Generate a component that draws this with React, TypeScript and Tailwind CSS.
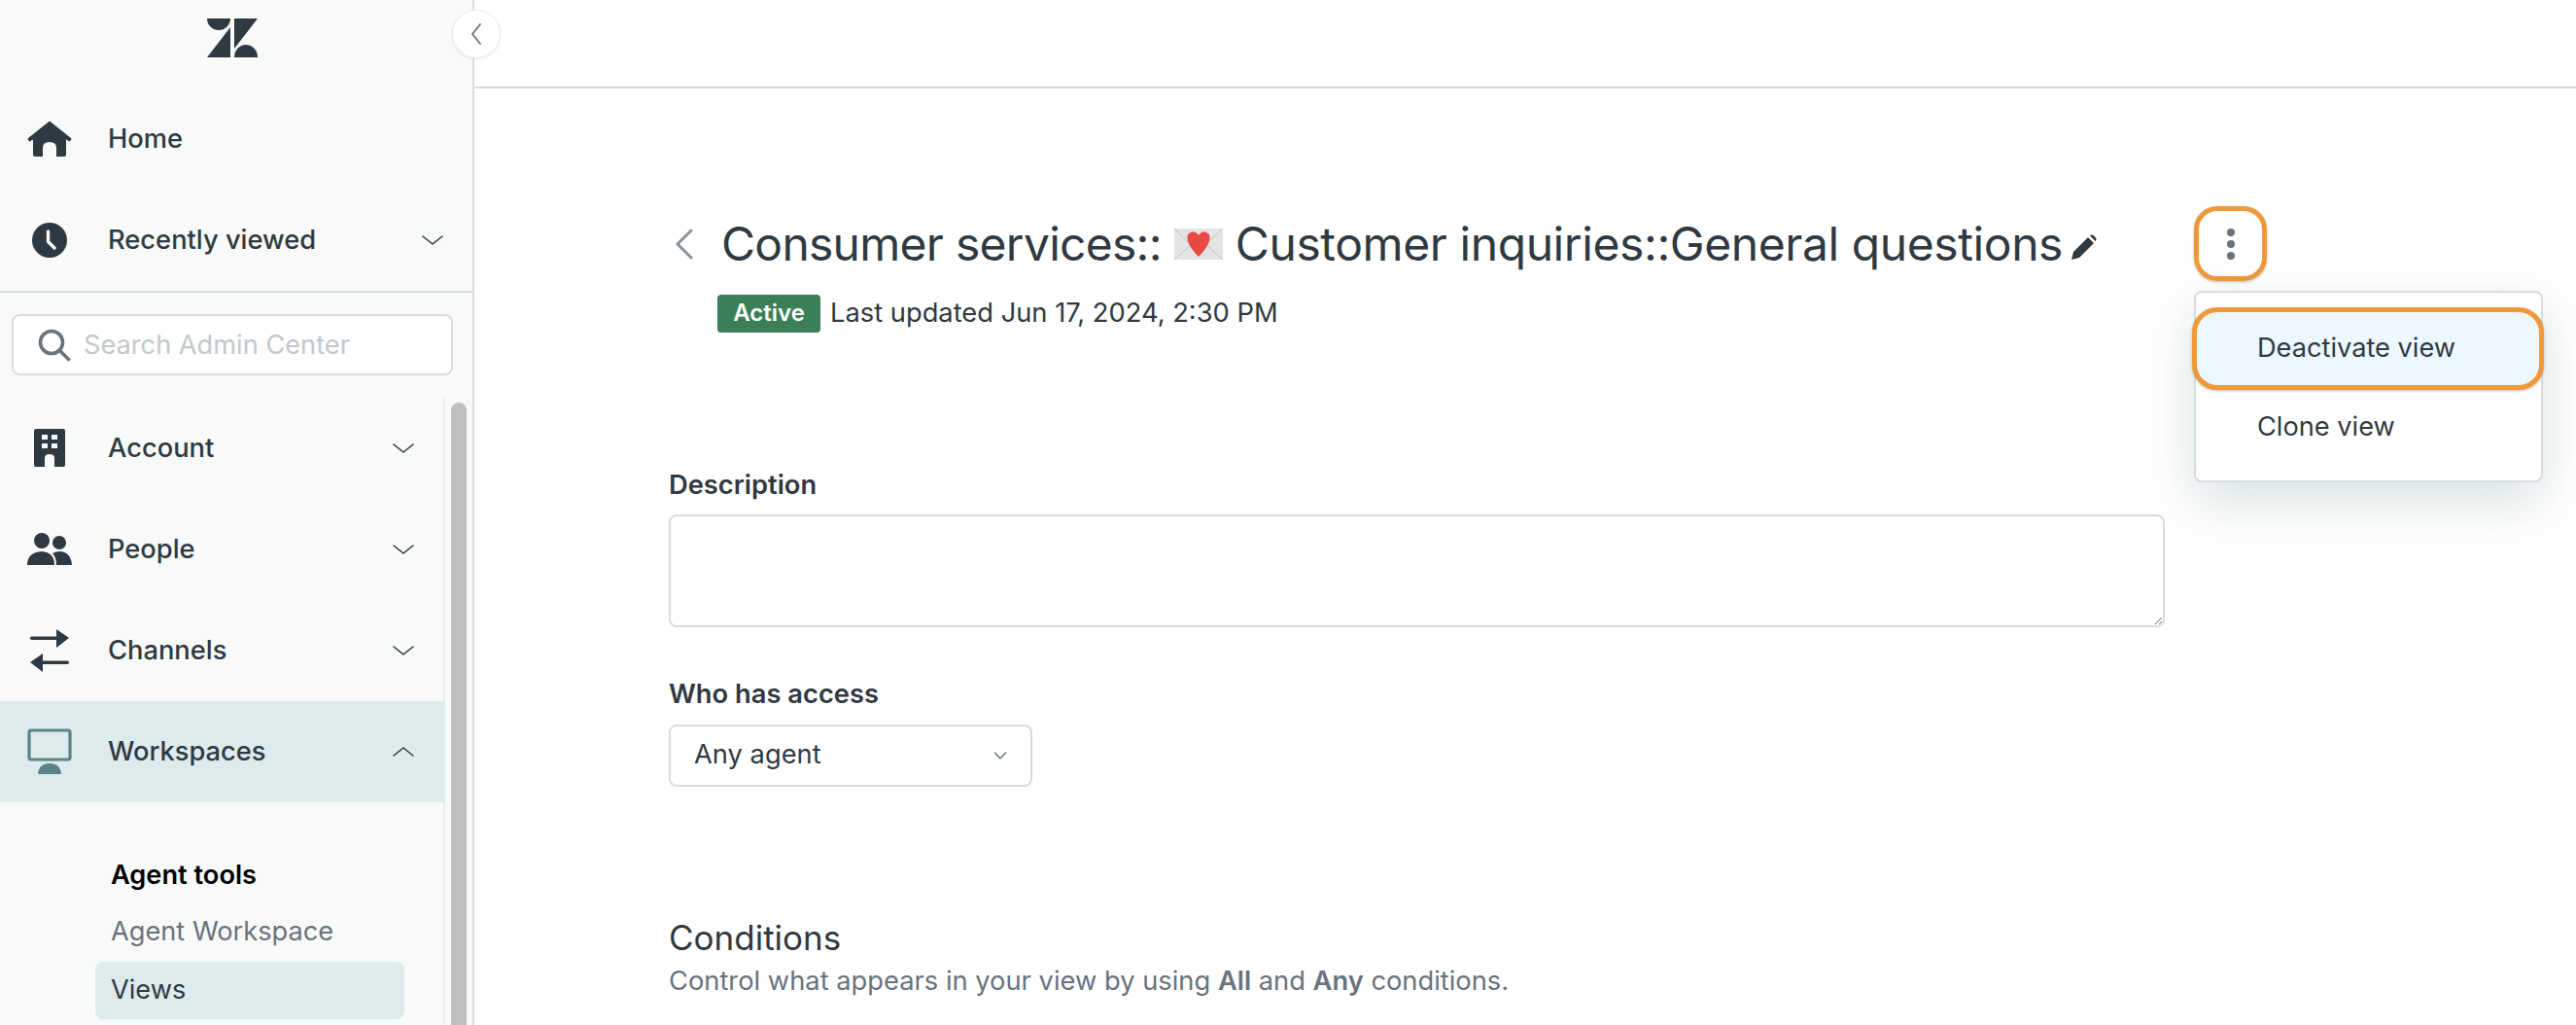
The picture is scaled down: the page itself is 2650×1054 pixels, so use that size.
import React from "react";

const Chevron = ({ up = false }: { up?: boolean }) => (
  <svg width="24" height="14" viewBox="0 0 24 14" fill="none" stroke="#2f3941" strokeWidth="1.6" strokeLinecap="round" strokeLinejoin="round">
    <path d={up ? "M2 11 L12 3 L22 11" : "M2 3 L12 11 L22 3"} />
  </svg>
);

const HomeIcon = () => (
  <svg width="46" height="38" viewBox="0 0 46 38" fill="#2f3941">
    <path d="M23 0.5 L45 18 Q46 19 45 20 L43.5 21.5 L40 19.5 L40 35 Q40 37 38 37 L30 37 L30 28 Q30 22 23 22 Q16 22 16 28 L16 37 L8 37 Q6 37 6 35 L6 19.5 L2.5 21.5 L1 20 Q0 19 1 18 Z" />
  </svg>
);

const ClockIcon = () => (
  <svg width="38" height="38" viewBox="0 0 38 38">
    <circle cx="19" cy="19" r="18" fill="#2f3941" />
    <path d="M17.5 10 L17.5 20.5 L24 27" fill="none" stroke="#f8f9f9" strokeWidth="3.4" strokeLinecap="round" strokeLinejoin="round" />
  </svg>
);

const BuildingIcon = () => (
  <svg width="32" height="40" viewBox="0 0 32 40">
    <rect x="0" y="0" width="32" height="39" rx="2" fill="#2f3941" />
    <g fill="#f8f9f9">
      <rect x="8" y="6" width="6" height="5" />
      <rect x="18" y="6" width="6" height="5" />
      <rect x="8" y="15" width="6" height="5" />
      <rect x="18" y="15" width="6" height="5" />
      <path d="M11 39 L11 30 Q11 26 16 26 Q21 26 21 30 L21 39 Z" />
    </g>
  </svg>
);

const PeopleIcon = () => (
  <svg width="46" height="34" viewBox="0 0 46 34" fill="#2f3941">
    <circle cx="15" cy="8" r="8" />
    <circle cx="33" cy="10" r="7" />
    <path d="M0 33 Q0 20 15 19 Q28 20 28 33 Z" />
    <path d="M30 33 Q30 25 26 21 Q29 19 34 19 Q45 20 46 33 Z" />
  </svg>
);

const ChannelsIcon = () => (
  <svg width="42" height="46" viewBox="0 0 42 46" fill="#2f3941">
    <rect x="1" y="8.5" width="36" height="3.4" rx="1.7" />
    <path d="M28 1 L41 10 L28 20 Z" />
    <rect x="5" y="33.5" width="36" height="3.4" rx="1.7" />
    <path d="M14 26 L1 35 L14 45 Z" />
  </svg>
);

const MonitorIcon = () => (
  <svg width="46" height="48" viewBox="0 0 46 48">
    <rect x="2" y="2" width="42" height="30" rx="2" fill="none" stroke="#5a8388" strokeWidth="3.2" />
    <path d="M11 47 Q12 36 23 36 Q34 36 35 47 Z" fill="#5a8388" />
  </svg>
);

const NavRow = ({ icon, label, open, chevron = true, active = false }: { icon: React.ReactNode; label: string; open?: boolean; chevron?: boolean; active?: boolean }) => (
  <div className={`h-[104px] flex items-center shrink-0 pr-[29px] ${active ? "bg-[#deebed]" : ""}`}>
    <div className="w-[111px] pl-[27px] pr-[36px] flex justify-center shrink-0">{icon}</div>
    <span className="flex-1 text-[27.3px] font-medium text-[#2f3941]">{label}</span>
    {chevron && <Chevron up={open} />}
  </div>
);

const Sidebar = () => (
  <aside className="w-[488px] h-full shrink-0 flex flex-col bg-[#f8f9f9] border-r-2 border-[#d8dcde]">
    <div className="h-[91px] shrink-0 flex items-center justify-center pb-[13px] pr-2">
      {/* logo */}
      <svg width="52" height="40" viewBox="0 0 52 40" fill="#2f3941">
        <path d="M24 9 L24 40 L0 40 Z" />
        <path d="M24 0 A12 12 0 0 1 0 0 Z" />
        <path d="M28 31 L28 0 L52 0 Z" />
        <path d="M28 40 A12 13 0 0 1 52 40 Z" />
      </svg>
    </div>
    <NavRow icon={<HomeIcon />} label="Home" chevron={false} />
    <div className="h-[104px] flex items-center pr-[29px] shrink-0">
      <div className="w-[111px] pl-[27px] pr-[36px] flex justify-center shrink-0"><ClockIcon /></div>
      <span className="flex-1 text-[27.3px] font-medium text-[#2f3941]">Recently viewed</span>
      <Chevron />
    </div>
    <div className="border-t-2 border-[#d8dcde] pl-3 pr-5 pt-[22px] pb-[23px] shrink-0">
      <div className="h-[63px] bg-white border-2 border-[#d8dcde] rounded-lg flex items-center pl-[25px]">
        <svg width="34" height="34" viewBox="0 0 34 34" fill="none" stroke="#68737d" strokeWidth="3.6" strokeLinecap="round">
          <circle cx="14" cy="14" r="11.5" />
          <path d="M22.5 22.5 L31.5 31.5" />
        </svg>
        <span className="ml-[13px] pt-[2px] text-[27.2px] text-[#c2c8cc]">Search Admin Center</span>
      </div>
    </div>
    <div className="flex-1 min-h-0 flex overflow-hidden">
      <nav className="w-[456px] shrink-0 flex flex-col">
        <NavRow icon={<BuildingIcon />} label="Account" />
        <NavRow icon={<PeopleIcon />} label="People" />
        <NavRow icon={<ChannelsIcon />} label="Channels" />
        <NavRow icon={<MonitorIcon />} label="Workspaces" open active />
        <div className="pl-[98px] pr-[40px] pt-[55px]">
          <div className="pl-4 h-10 flex items-center text-[27.2px] font-semibold text-black">Agent tools</div>
          <div className="pl-4 mt-[18px] h-10 flex items-center text-[27.2px] text-[#68737d]">Agent Workspace</div>
          <div className="pl-4 mt-[11px] h-[59px] flex items-center rounded-lg bg-[#deebed] text-[27.2px] text-[#2f3941]">Views</div>
        </div>
      </nav>
      <div className="flex-1 border-l-2 border-[#e9ebed] pl-[6px] pt-[5px]">
        <div className="w-4 h-full rounded-t-lg bg-[#bfbfbf]" />
      </div>
    </div>
  </aside>
);

const LoveLetter = () => (
  <svg width="50" height="32" viewBox="0 0 50 32" className="shrink-0">
    <rect width="50" height="32" fill="#e4e4e2" />
    <path d="M0 0 L25 24 L50 0 M0 32 L18 16 M50 32 L32 16" fill="none" stroke="#c4c4c2" strokeWidth="1" />
    <path d="M25 29 Q11 15 14 6 Q20 0 25 7 Q30 0 36 6 Q39 15 25 29 Z" fill="#e84a45" />
  </svg>
);

const ActionsMenu = () => (
  <div className="relative w-[75px] h-[77px] shrink-0 flex items-center justify-center rounded-[24px] border-[5px] border-[#f0993a] shadow-[0_1px_3px_rgba(0,0,0,0.25)]">
    <svg width="10" height="34" viewBox="0 0 10 34" fill="#68737d">
      <circle cx="5" cy="5" r="4" />
      <circle cx="5" cy="17" r="4" />
      <circle cx="5" cy="29" r="4" />
    </svg>
    <div className="absolute left-[-5px] top-[82px] w-[359px] h-[197px] bg-white border-2 border-[#d8dcde] rounded-lg shadow-[0_20px_56px_rgba(4,68,77,0.16)] z-10">
      <div className="absolute left-[-4px] right-[-3px] top-[15px] h-[85px] bg-[#edf7ff] border-[5px] border-[#f0993a] rounded-[26px] shadow-[0_1px_3px_rgba(0,0,0,0.25)] flex items-center pl-[62px] text-[27.2px] text-[#2f3941]">
        Deactivate view
      </div>
      <div className="absolute left-[63px] top-[118px] h-10 flex items-center text-[27.2px] text-[#2f3941]">Clone view</div>
    </div>
  </div>
);

export default function App() {
  return (
    <div className="w-[2650px] h-[1054px] flex overflow-hidden bg-white relative" style={{ fontFamily: "Inter, sans-serif" }}>
      <Sidebar />
      {/* collapse toggle sits over the sidebar edge */}
      <div className="absolute left-[465px] top-[10px] w-[50px] h-[50px] rounded-full bg-white border border-[#e9ebed] shadow-[0_1px_3px_rgba(0,0,0,0.08)] flex items-center justify-center z-10">
        <svg width="12" height="24" viewBox="0 0 12 24" fill="none" stroke="#68737d" strokeWidth="1.8" strokeLinecap="round" strokeLinejoin="round">
          <path d="M10 2 L2 12 L10 22" />
        </svg>
      </div>
      <main className="flex-1 min-w-0 flex flex-col">
        <div className="h-[91px] shrink-0 border-b-2 border-[#d8dcde]" />
        <div className="pl-[200px] pt-[121px]">
          <div className="w-[1644px] flex items-center justify-between">
            <div className="flex items-center">
              <svg width="20" height="32" viewBox="0 0 20 32" fill="none" stroke="#87929d" strokeWidth="3" strokeLinecap="round" strokeLinejoin="round" className="ml-[6px] mr-[28px]">
                <path d="M17 2 L3 16 L17 30" />
              </svg>
              <h1 className="flex items-center whitespace-nowrap text-[48px] leading-[64px] text-[#2f3941] font-normal">
                <span className="tracking-[-0.73px]">Consumer services::</span>
                <span className="mx-[13px]"><LoveLetter /></span>
                <span className="tracking-[-0.41px]">Customer inquiries::General questions</span>
              </h1>
              <svg width="28" height="28" viewBox="0 0 28 28" fill="#2f3941" className="ml-[8px] mt-[6px]">
                <path d="M1 27 L3 19 L18 4 L24 10 L9 25 Z" />
                <path d="M20 2.5 Q22 0.5 24 2.5 L25.5 4 Q27.5 6 25.5 8 Z" />
              </svg>
            </div>
            <ActionsMenu />
          </div>
          <div className="ml-[50px] mt-[13px] flex items-center">
            <span className="h-[39px] w-[106px] rounded flex items-center justify-center bg-[#3a7f57] text-white text-[24px] font-semibold">Active</span>
            <span className="ml-[10px] text-[27.3px] text-[#2f3941]">Last updated Jun 17, 2024, 2:30 PM</span>
          </div>
          <div className="mt-[137px] h-10 flex items-center text-[27.3px] font-semibold text-[#2f3941]">Description</div>
          <textarea className="block mt-[9px] w-[1539px] h-[116px] bg-white border-2 border-[#d8dcde] rounded-lg resize-y" />
          <div className="mt-[50px] h-10 flex items-center text-[27.3px] font-semibold text-[#2f3941]">Who has access</div>
          <div className="mt-[10px] w-[374px] h-[64px] bg-white border-2 border-[#d8dcde] rounded-lg flex items-center justify-between pl-[24px] pr-[24px] text-[27.3px] text-[#2f3941]">
            <span>Any agent</span>
            <svg width="14" height="10" viewBox="0 0 14 10" fill="none" stroke="#68737d" strokeWidth="1.4" strokeLinecap="round" strokeLinejoin="round">
              <path d="M1.5 2 L7 8 L12.5 2" />
            </svg>
          </div>
          <h2 className="mt-[131px] h-12 flex items-center text-[35px] font-normal text-[#2f3941]">Conditions</h2>
          <p className="mt-px text-[27.3px] leading-10 text-[#68737d]">
            Control what appears in your view by using <strong className="font-semibold">All</strong> and <strong className="font-semibold">Any</strong> conditions.
          </p>
        </div>
      </main>
    </div>
  );
}
